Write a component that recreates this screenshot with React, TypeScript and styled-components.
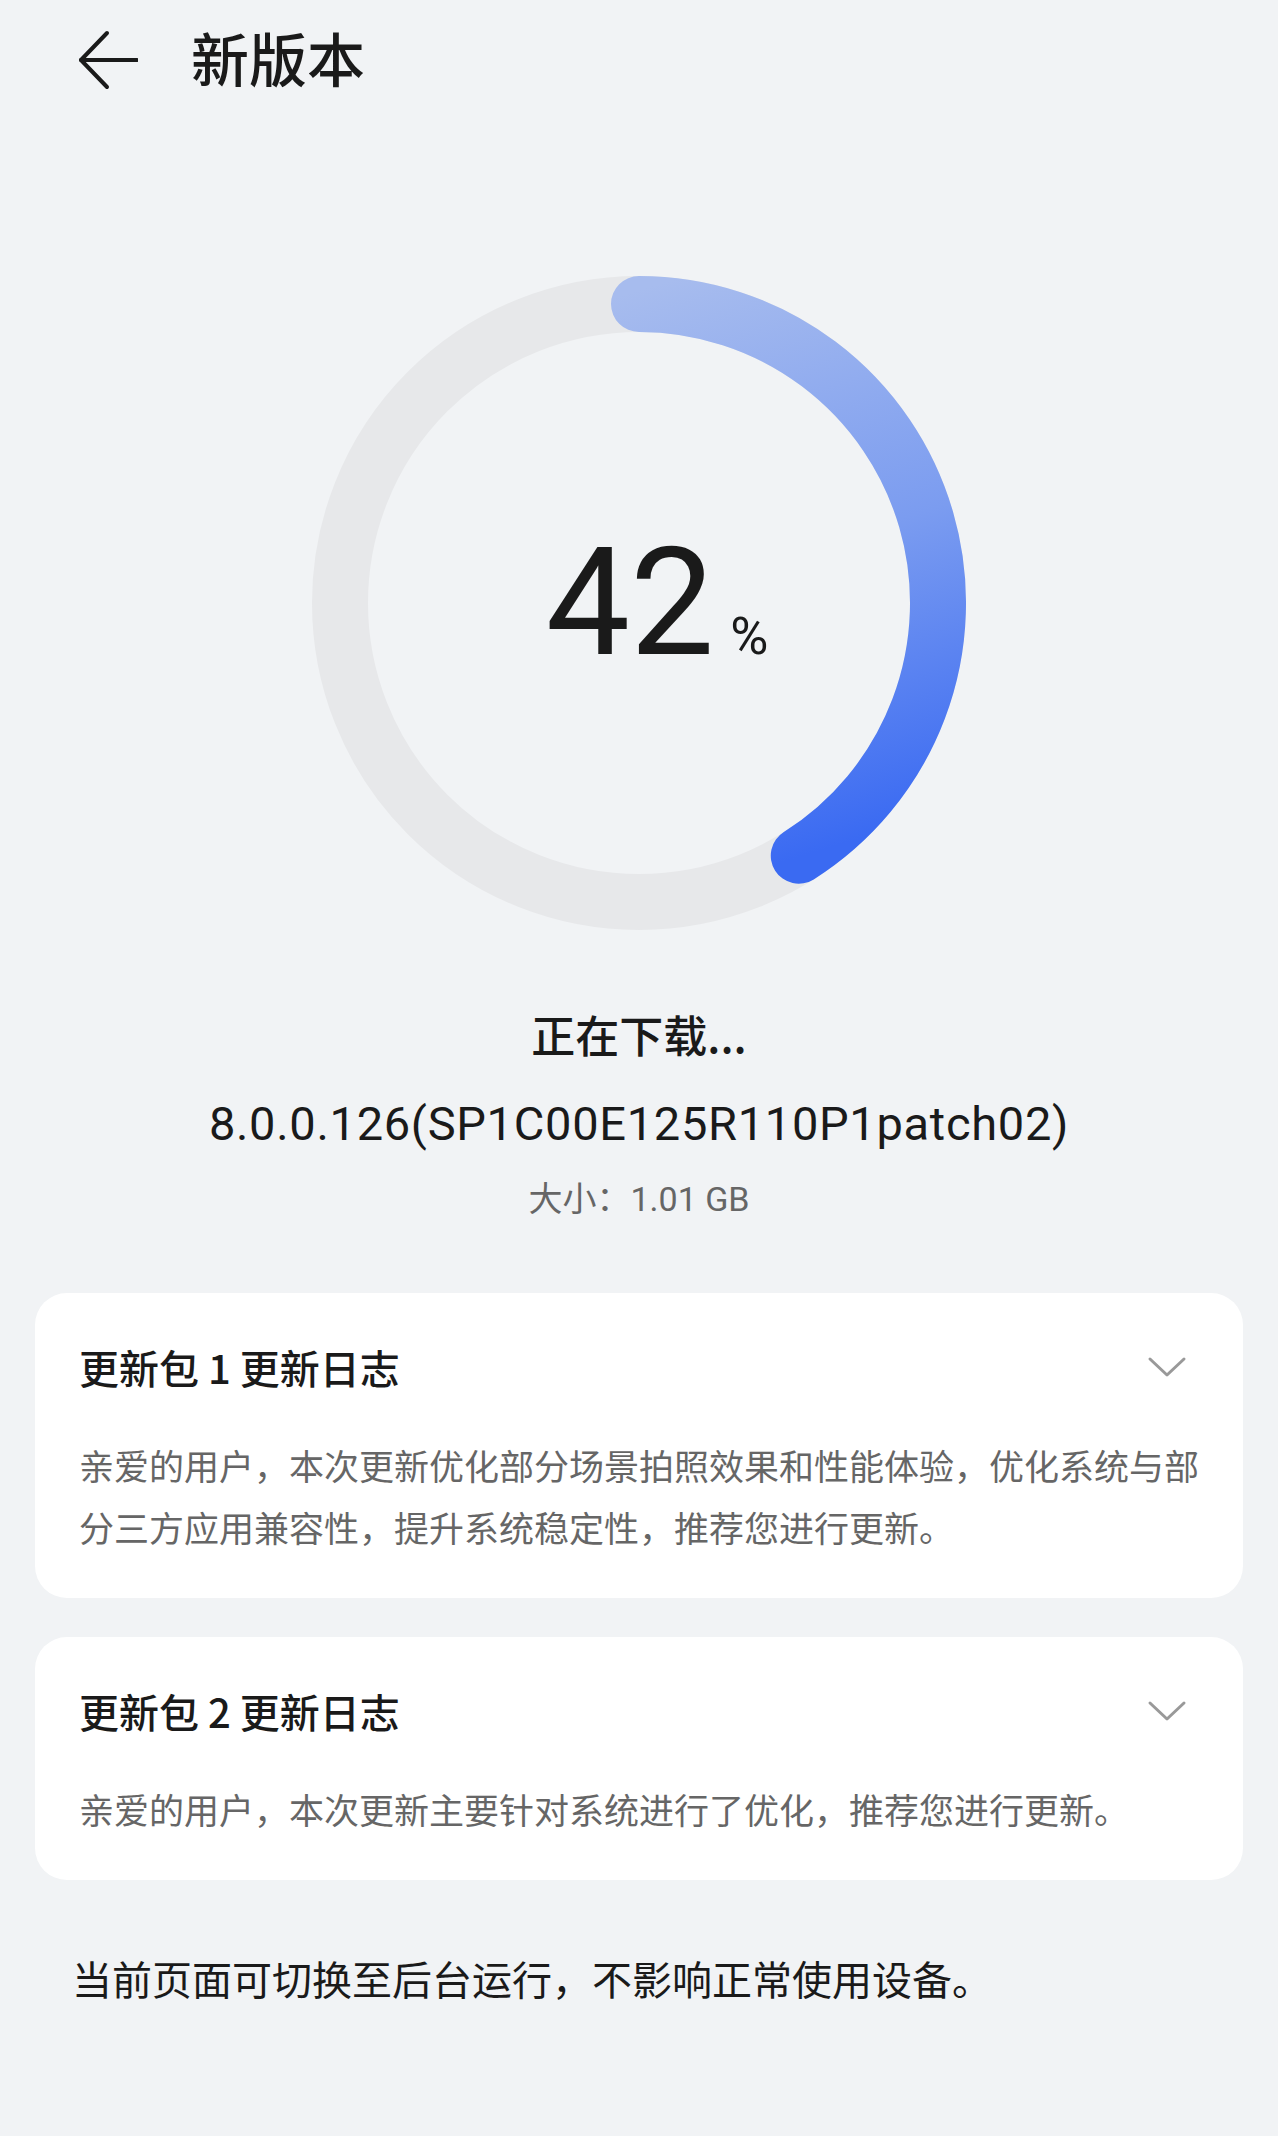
import styled, { createGlobalStyle } from "styled-components";

const GlobalStyle = createGlobalStyle`
  html, body {
    margin: 0;
    padding: 0;
    background: #f1f3f5;
  }
  body {
    font-family: Roboto, "Noto Sans CJK SC", "Noto Sans", sans-serif;
    color: #1a1a1a;
  }
`;

const RADIUS = 299;
const STROKE = 56;
const SIZE = (RADIUS + STROKE / 2) * 2;
const PROGRESS = 42;

const notes = [
  {
    title: "更新包 1 更新日志",
    body: "亲爱的用户，本次更新优化部分场景拍照效果和性能体验，优化系统与部分三方应用兼容性，提升系统稳定性，推荐您进行更新。",
  },
  {
    title: "更新包 2 更新日志",
    body: "亲爱的用户，本次更新主要针对系统进行了优化，推荐您进行更新。",
  },
];

const Page = styled.div`
  width: 1278px;
  min-height: 2136px;
  background: #f1f3f5;
  display: flex;
  flex-direction: column;
`;

const TopBar = styled.header`
  height: 120px;
  display: flex;
  align-items: center;
  padding-left: 78px;
`;

const BackButton = styled.button`
  width: 60px;
  height: 60px;
  padding: 0;
  border: none;
  background: none;
  display: flex;
  color: #1a1a1a;
`;

const PageTitle = styled.h1`
  margin: 0 0 6px 53px;
  font-family: "Noto Sans CJK SC", sans-serif;
  font-size: 58px;
  font-weight: 500;
  line-height: 1;
  color: #1a1a1a;
`;

const RingWrap = styled.div`
  position: relative;
  width: ${SIZE}px;
  height: ${SIZE}px;
  margin: 156px auto 0;
`;

const CenterLabel = styled.div`
  position: absolute;
  inset: 0;
  display: flex;
  align-items: center;
  justify-content: center;
  padding: 0 0 0 36px;
`;

const Number = styled.span`
  font-family: Roboto, sans-serif;
  font-size: 150px;
  font-weight: 400;
  line-height: 1;
  color: #1a1a1a;
`;

const Percent = styled.span`
  font-family: Roboto, sans-serif;
  font-size: 52px;
  line-height: 1;
  margin-left: 16px;
  color: #1a1a1a;
`;

const NumberRow = styled.div`
  display: flex;
  align-items: baseline;
`;

const Status = styled.div`
  margin-top: 74px;
  text-align: center;
  font-family: "Noto Sans CJK SC", sans-serif;
  font-size: 44px;
  font-weight: 500;
  line-height: 60px;
`;

const Version = styled.div`
  margin-top: 30px;
  text-align: center;
  font-family: Roboto, sans-serif;
  font-size: 47px;
  letter-spacing: 0.7px;
  line-height: 60px;
  color: #1a1a1a;
`;

const SizeInfo = styled.div`
  margin-top: 23px;
  text-align: center;
  font-size: 34px;
  line-height: 44px;
  color: #666666;
`;

const Cards = styled.div`
  margin: 72px 35px 0;
  display: flex;
  flex-direction: column;
  gap: 39px;
`;

const Card = styled.section`
  background: #ffffff;
  border-radius: 32px;
  padding: 46px 40px 40px 44px;
`;

const CardHead = styled.div`
  display: flex;
  align-items: center;
  justify-content: space-between;
  height: 56px;
  padding-right: 16px;
`;

const CardTitle = styled.h2`
  margin: 0;
  font-family: "Noto Sans CJK SC", sans-serif;
  font-size: 40px;
  font-weight: 500;
  line-height: 56px;
  color: #1a1a1a;
`;

const CardBody = styled.p`
  margin: 39px 0 0;
  font-family: "Noto Sans CJK SC", sans-serif;
  font-size: 35px;
  line-height: 62px;
  color: #666666;
`;

const Footnote = styled.p`
  margin: 70px 0 0 72px;
  font-family: "Noto Sans CJK SC", sans-serif;
  font-size: 40px;
  line-height: 56px;
  color: #1a1a1a;
`;

function ProgressRing({ value }: { value: number }) {
  const c = SIZE / 2;
  // round caps add length, so the drawn arc stops a little short of value%
  const angle = (value / 100) * 360 - 3.5;
  const rad = (angle * Math.PI) / 180;
  const ex = c + RADIUS * Math.sin(rad);
  const ey = c - RADIUS * Math.cos(rad);
  const large = angle > 180 ? 1 : 0;
  return (
    <RingWrap>
      <svg width={SIZE} height={SIZE} viewBox={`0 0 ${SIZE} ${SIZE}`}>
        <defs>
          <linearGradient id="arcFill" gradientUnits="userSpaceOnUse" x1={c - 20} y1={20} x2={c + 150} y2={SIZE - 70}>
            <stop offset="0" stopColor="#a7bcee" />
            <stop offset="0.5" stopColor="#7b9cf0" />
            <stop offset="1" stopColor="#3a6af2" />
          </linearGradient>
        </defs>
        <circle cx={c} cy={c} r={RADIUS} fill="none" stroke="#e7e8ea" strokeWidth={STROKE} />
        <path
          d={`M ${c} ${c - RADIUS} A ${RADIUS} ${RADIUS} 0 ${large} 1 ${ex} ${ey}`}
          fill="none"
          stroke="url(#arcFill)"
          strokeWidth={STROKE}
          strokeLinecap="round"
        />
      </svg>
      <CenterLabel>
        <NumberRow>
          <Number>{value}</Number>
          <Percent>%</Percent>
        </NumberRow>
      </CenterLabel>
    </RingWrap>
  );
}

export default function App() {
  return (
    <Page>
      <GlobalStyle />
      <TopBar>
        <BackButton aria-label="返回">
          <svg width="60" height="60" viewBox="0 0 60 60" fill="none" stroke="currentColor" strokeWidth="4" strokeLinecap="round" strokeLinejoin="round">
            <path d="M3 30 H59" />
            <path d="M29 3 L3 30 L29 57" />
          </svg>
        </BackButton>
        <PageTitle>新版本</PageTitle>
      </TopBar>

      <ProgressRing value={PROGRESS} />

      <Status>正在下载...</Status>
      <Version>8.0.0.126(SP1C00E125R110P1patch02)</Version>
      <SizeInfo>大小：1.01 GB</SizeInfo>

      <Cards>
        {notes.map((n) => (
          <Card key={n.title}>
            <CardHead>
              <CardTitle>{n.title}</CardTitle>
              <svg width="40" height="22" viewBox="0 0 40 22" fill="none" stroke="#999999" strokeWidth="3" strokeLinecap="round" strokeLinejoin="round">
                <path d="M3 3 L20 19 L37 3" />
              </svg>
            </CardHead>
            <CardBody>{n.body}</CardBody>
          </Card>
        ))}
      </Cards>

      <Footnote>当前页面可切换至后台运行，不影响正常使用设备。</Footnote>
    </Page>
  );
}
